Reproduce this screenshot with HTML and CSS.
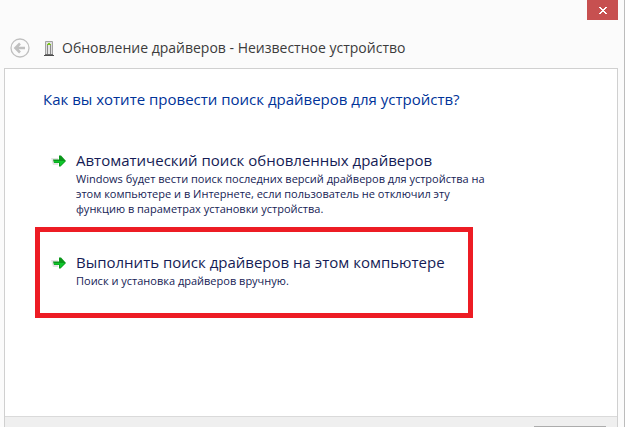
FILE: index.html
```html
<!DOCTYPE html>
<html lang="ru">
<head>
    <meta charset="UTF-8">
    <meta name="viewport" content="width=device-width, initial-scale=1.0">
    <title>Обновление драйверов</title>
    <link rel="stylesheet" href="styles.css">
</head>
<body>
    <div class="window">
        <div class="titlebar">
            <button class="close" type="button" aria-label="Закрыть">
                <svg width="8" height="7" viewBox="0 0 8 7" shape-rendering="crispEdges" fill="#fff">
                    <path d="M0 0h2v1h1v1h2v-1h1v-1h2v1h-1v1h-1v1h-1v1h1v1h1v1h1v1h-2v-1h-1v-1h-2v1h-1v1h-2v-1h1v-1h1v-1h1v-1h-1v-1h-1v-1h-1z"/>
                </svg>
            </button>
        </div>

        <header class="header">
            <button class="back" type="button" aria-label="Назад" disabled>
                <svg width="20" height="20" viewBox="0 0 20 20" fill="none" stroke="#c0c0c0">
                    <circle cx="10" cy="10" r="9" stroke-width="1.300"/>
                    <path d="M5.500 10H15M10 5.500L5.500 10L10 14.500" stroke-width="2.600"/>
                </svg>
            </button>
            <svg class="device" width="10" height="15" viewBox="0 0 10 15">
                <path d="M1.500 .5h7v13h-7z" fill="#dedede" stroke="#a3a3a3"/>
                <path d="M3.500 4v9M6.500 4v9" stroke="#8a8a8a"/>
                <path d="M4 4h2v9H4z" fill="#e6e6e6"/>
                <path d="M4 2h2v1h1v1H3V3h1z" fill="#7ac51c"/>
                <path d="M0 14.500h10" stroke="#4c4c4c"/>
                <path d="M1 13.500h8" stroke="#6c6c6c"/>
            </svg>
            <span class="caption">Обновление драйверов - Неизвестное устройство</span>
        </header>

        <main class="panel">
            <div class="content">
                <h1>Как вы хотите провести поиск драйверов для устройств?</h1>

                <button class="option" type="button">
                    <svg class="arrow" width="16" height="16" viewBox="0 0 16 16">
                        <path d="M1 5h7v7H3z" fill="#e4e4e4"/>
                        <path d="M3 6.500h6V2.500h2L16 8l-5.500 5.500H9V10H4z" fill="#0a961a"/>
                        <path d="M4 8h11l-5 5V9.500H4z" fill="#0fc52c"/>
                    </svg>
                    <span class="text">
                        <span class="name">Автоматический поиск обновленных драйверов</span>
                        <span class="note">Windows будет вести поиск последних версий драйверов для устройства на<br>этом компьютере и в Интернете, если пользователь не отключил эту<br>функцию в параметрах установки устройства.</span>
                    </span>
                </button>

                <button class="option marked" type="button">
                    <svg class="arrow" width="16" height="16" viewBox="0 0 16 16">
                        <path d="M1 5h7v7H3z" fill="#e4e4e4"/>
                        <path d="M3 6.500h6V2.500h2L16 8l-5.500 5.500H9V10H4z" fill="#0a961a"/>
                        <path d="M4 8h11l-5 5V9.500H4z" fill="#0fc52c"/>
                    </svg>
                    <span class="text">
                        <span class="name">Выполнить поиск драйверов на этом компьютере</span>
                        <span class="note">Поиск и установка драйверов вручную.</span>
                    </span>
                </button>
            </div>

            <footer class="footer">
                <button class="cancel" type="button" aria-label="Отмена"></button>
            </footer>
        </main>
    </div>
</body>
</html>
```

FILE: styles.css
```css
* {
    box-sizing: border-box;
}

body {
    margin: 0;
    height: 100vh;
    overflow: hidden;
    background: #fff;
    font-family: "Open Sans", "Noto Sans", sans-serif;
}

button {
    font: inherit;
    text-align: left;
}

svg {
    display: block;
    flex: none;
}

.window {
    display: flex;
    flex-direction: column;
    height: 100%;
    margin-right: 2px;
    padding: 0 6px 0 4px;
    border-right: 1px solid #bcbcbc;
    background: #fbfbfb;
}

.titlebar {
    display: flex;
    justify-content: flex-end;
}

.close {
    display: flex;
    align-items: center;
    justify-content: center;
    width: 31px;
    height: 20px;
    padding: 0;
    border: 0;
    background: #c75050;
}

.header {
    display: flex;
    align-items: center;
    height: 48px;
    padding: 8px 6px 0;
}

.back {
    padding: 0;
    border: 0;
    background: none;
}

.device {
    margin: 0 8px 0 14px;
}

.caption {
    font-size: 14px;
    line-height: 20px;
    color: #3c3c3c;
    white-space: nowrap;
}

.panel {
    display: flex;
    flex-direction: column;
    flex: 1;
    min-height: 0;
    border: 1px solid #d0d0d0;
    border-bottom: 0;
    background: #fff;
}

.content {
    flex: 1;
    min-height: 0;
    padding: 20px 30px 0;
}

h1 {
    margin: 0 0 16px;
    padding-left: 8px;
    font-size: 15px;
    font-weight: normal;
    line-height: 20px;
    color: #003399;
    white-space: nowrap;
}

.option {
    display: flex;
    gap: 10px;
    width: 100%;
    max-width: 438px;
    padding: 19px 10px 6px;
    border: 5px solid transparent;
    background: none;
    color: #151c55;
    white-space: nowrap;
}

.marked {
    padding-bottom: 25px;
    border-color: #ed1c24;
}

.arrow {
    margin-top: 4px;
}

.name {
    display: block;
    font-size: 15px;
    line-height: 22px;
}

.note {
    display: block;
    font-size: 11px;
    line-height: 15px;
}

.footer {
    display: flex;
    justify-content: flex-end;
    align-items: flex-start;
    flex: none;
    height: 11px;
    padding: 9px 11px 0;
    overflow: hidden;
    border-top: 1px solid #dadada;
    background: #efefef;
}

.cancel {
    width: 72px;
    height: 22px;
    padding: 0;
    border: 1px solid #acacac;
    background: #e8e8e8;
}
```
